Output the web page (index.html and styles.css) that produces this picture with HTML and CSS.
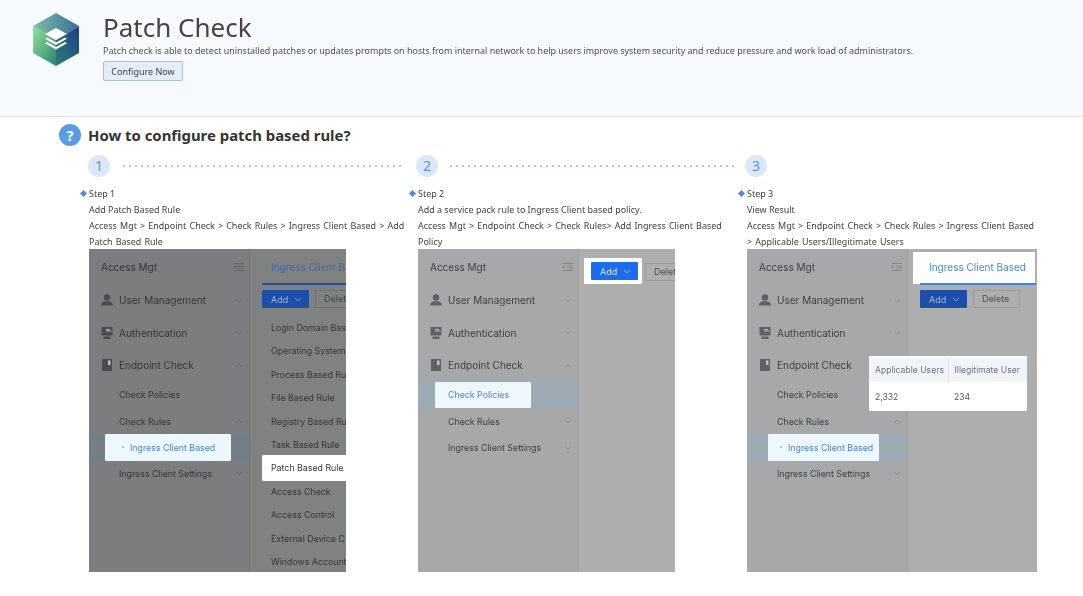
FILE: index.html
```html
<!DOCTYPE html>
<html lang="en">
<head>
<meta charset="utf-8">
<title>Patch Check</title>
<link rel="stylesheet" href="styles.css">
</head>
<body>
<svg class="defs" width="0" height="0" aria-hidden="true">
  <defs>
    <linearGradient id="gLeft" x1="0" y1="0" x2="1" y2="1"><stop offset="0" stop-color="#8fe39a"/><stop offset="1" stop-color="#2f8272"/></linearGradient>
    <linearGradient id="gRight" x1="0" y1="1" x2="1" y2="0"><stop offset="0" stop-color="#2f7c78"/><stop offset="1" stop-color="#1c3f86"/></linearGradient>
    <linearGradient id="gTop" x1="0" y1="0" x2="1" y2="0"><stop offset="0" stop-color="#7cc2a0"/><stop offset="1" stop-color="#3a6a9c"/></linearGradient>
  </defs>
  <symbol id="down" viewBox="0 0 10 6"><path d="M1.5 1.2 5 4.7l3.5-3.5" fill="none" stroke="currentColor" stroke-width="1"/></symbol>
  <symbol id="up" viewBox="0 0 10 6"><path d="M1.5 4.7 5 1.2l3.5 3.5" fill="none" stroke="currentColor" stroke-width="1"/></symbol>
  <symbol id="fold" viewBox="0 0 10 8"><path d="M0 .5h10M4 3h6M4 5h6M0 7.500h10" stroke="currentColor" stroke-width=".8" fill="none"/><path d="M0 2.500 2.500 4 0 5.500z" fill="currentColor"/></symbol>
  <symbol id="user" viewBox="0 0 12 12"><circle cx="6" cy="3.500" r="3.200" fill="currentColor"/><path d="M0 11.500c0-2.500 2-4 4-4.300h4c2 .3 4 1.800 4 4.300z" fill="currentColor"/></symbol>
  <symbol id="screen" viewBox="0 0 12 12"><path d="M.5 0h11v8.500H.5zM2.500 9.500h7V12h-7z" fill="currentColor"/><path d="M5 4h5.500M5 2.500h4" stroke="#c4c4c4" stroke-width=".9"/></symbol>
  <symbol id="book" viewBox="0 0 12 12"><path d="M1 0h10v12H1z" fill="currentColor"/><path d="M7 1.500h2.500v5L8.200 5.500 7 6.500z" fill="#c4c4c4"/></symbol>
</svg>

<header class="hero">
  <svg class="logo" viewBox="0 0 46 53" aria-hidden="true">
    <path d="M23 0 46 13 23 27 0 13z" fill="url(#gTop)"/>
    <path d="M0 13 23 27V53L0 40z" fill="url(#gLeft)"/>
    <path d="M46 13 23 27V53L46 40z" fill="url(#gRight)"/>
    <g fill="#fff">
      <path d="M23 15 34 21 23 27 12 21z"/>
      <path d="M14 24.500 23 29.500l9-5 2 1.300L23 32 12 25.800z"/>
      <path d="M14 29 23 34l9-5 2 1.300L23 36.500 12 30.300z"/>
    </g>
  </svg>
  <div class="hero-body">
    <h1 class="hero-title">Patch Check</h1>
    <p class="hero-desc">Patch check is able to detect uninstalled patches or updates prompts on hosts from internal network to help users improve system security and reduce pressure and work load of administrators.</p>
    <button class="configure">Configure Now</button>
  </div>
</header>

<main class="guide">
  <h2 class="guide-title"><span class="qmark">?</span>How to configure patch based rule?</h2>
  <div class="steps">

    <section class="step step-one">
      <div class="step-head"><span class="num">1</span><span class="dots"></span></div>
      <div class="step-text">
        <p class="step-label">Step 1</p>
        <p>Add Patch Based Rule</p>
        <p class="path">Access Mgt &gt; Endpoint Check &gt; Check Rules &gt; Ingress Client Based &gt; Add Patch Based Rule</p>
      </div>
      <div class="shot shot-dark">
        <nav class="side">
          <div class="side-title">Access Mgt<svg class="fold"><use href="#fold"/></svg></div>
          <div class="top-row"><svg class="ico"><use href="#user"/></svg>User Management<svg class="chev"><use href="#down"/></svg></div>
          <div class="top-row"><svg class="ico"><use href="#screen"/></svg>Authentication<svg class="chev"><use href="#down"/></svg></div>
          <div class="top-row"><svg class="ico"><use href="#book"/></svg>Endpoint Check<svg class="chev"><use href="#up"/></svg></div>
          <div class="sub-row">Check Policies</div>
          <div class="sub-row">Check Rules<svg class="chev"><use href="#up"/></svg></div>
          <div class="sub-row band"><div class="lit lit-leaf lit-a"><i class="dot"></i>Ingress Client Based</div></div>
          <div class="sub-row">Ingress Client Settings<svg class="chev"><use href="#down"/></svg></div>
        </nav>
        <div class="pane">
          <div class="tabs"><span class="tab">Ingress Client B</span></div>
          <div class="tools"><span class="add">Add<svg class="add-chev"><use href="#down"/></svg></span><span class="del">Delet</span></div>
          <ul class="menu">
            <li>Login Domain Bas</li>
            <li>Operating System</li>
            <li>Process Based Ru</li>
            <li>File Based Rule</li>
            <li>Registry Based Ru</li>
            <li>Task Based Rule</li>
            <li class="menu-lit">Patch Based Rule</li>
            <li>Access Check</li>
            <li>Access Control</li>
            <li>External Device C</li>
            <li>Windows Account</li>
          </ul>
        </div>
      </div>
    </section>

    <section class="step step-two">
      <div class="step-head"><span class="num">2</span><span class="dots"></span></div>
      <div class="step-text">
        <p class="step-label">Step 2</p>
        <p>Add a service pack rule to Ingress Client based policy.</p>
        <p class="path">Access Mgt &gt; Endpoint Check &gt; Check Rules&gt; Add Ingress Client Based Policy</p>
      </div>
      <div class="shot">
        <nav class="side">
          <div class="side-title">Access Mgt<svg class="fold"><use href="#fold"/></svg></div>
          <div class="top-row"><svg class="ico"><use href="#user"/></svg>User Management<svg class="chev"><use href="#down"/></svg></div>
          <div class="top-row"><svg class="ico"><use href="#screen"/></svg>Authentication<svg class="chev"><use href="#down"/></svg></div>
          <div class="top-row"><svg class="ico"><use href="#book"/></svg>Endpoint Check<svg class="chev"><use href="#up"/></svg></div>
          <div class="sub-row band"><div class="lit lit-b">Check Policies</div></div>
          <div class="sub-row">Check Rules<svg class="chev"><use href="#down"/></svg></div>
          <div class="sub-row">Ingress Client Settings<svg class="chev"><use href="#down"/></svg></div>
        </nav>
        <div class="pane pane-b">
          <div class="tools tools-b">
            <div class="add-lit"><span class="add add-bright">Add<svg class="add-chev"><use href="#down"/></svg></span></div>
            <span class="del">Delet</span>
          </div>
        </div>
      </div>
    </section>

    <section class="step step-wide">
      <div class="step-head"><span class="num">3</span></div>
      <div class="step-text">
        <p class="step-label">Step 3</p>
        <p>View Result</p>
        <p class="path">Access Mgt &gt; Endpoint Check &gt; Check Rules &gt; Ingress Client Based &gt; Applicable Users/Illegitimate Users</p>
      </div>
      <div class="shot">
        <nav class="side">
          <div class="side-title">Access Mgt<svg class="fold"><use href="#fold"/></svg></div>
          <div class="top-row"><svg class="ico"><use href="#user"/></svg>User Management<svg class="chev"><use href="#down"/></svg></div>
          <div class="top-row"><svg class="ico"><use href="#screen"/></svg>Authentication<svg class="chev"><use href="#down"/></svg></div>
          <div class="top-row"><svg class="ico"><use href="#book"/></svg>Endpoint Check<svg class="chev"><use href="#up"/></svg></div>
          <div class="sub-row">Check Policies</div>
          <div class="sub-row">Check Rules<svg class="chev"><use href="#up"/></svg></div>
          <div class="sub-row band"><div class="lit lit-leaf lit-c"><i class="dot"></i>Ingress Client Based</div></div>
          <div class="sub-row">Ingress Client Settings<svg class="chev"><use href="#down"/></svg></div>
        </nav>
        <div class="pane">
          <div class="tabs tabs-lit"><span class="tab">Ingress Client Based</span></div>
          <div class="tools"><span class="add">Add<svg class="add-chev"><use href="#down"/></svg></span><span class="del">Delete</span></div>
        </div>
        <table class="result">
          <thead><tr><th>Applicable Users</th><th>Illegitimate User</th></tr></thead>
          <tbody><tr><td>2,332</td><td>234</td></tr></tbody>
        </table>
      </div>
    </section>

  </div>
</main>
</body>
</html>
```

FILE: styles.css
```css
* { box-sizing: border-box; }
html, body { margin: 0; padding: 0; }
body {
  width: 1083px;
  height: 596px;
  overflow: hidden;
  background: #fff;
  color: #444;
  font-family: "Noto Sans", "Liberation Sans", sans-serif;
}
p, h1, h2, ul { margin: 0; padding: 0; }
.defs { position: absolute; }

.hero {
  height: 117px;
  display: flex;
  align-items: flex-start;
  padding: 13px 0 0 33px;
  background: #f6f9fd;
  border-bottom: 1px solid #dfe3e8;
}
.logo { width: 46px; height: 53px; flex: none; filter: blur(.3px); }
.hero-body { margin-left: 24px; filter: blur(.2px); }
.hero-title {
  margin-top: -1px;
  font-size: 26px;
  font-weight: 400;
  line-height: 30px;
  color: #444;
}
.hero-desc { margin-top: 2px; font-size: 8.95px; line-height: 14px; color: #4d4d4d; white-space: nowrap; }
.configure {
  display: block;
  width: 80px;
  height: 20px;
  margin-top: 3px;
  padding: 0;
  font: 9px/19px "Noto Sans", "Liberation Sans", sans-serif;
  color: #3c3c3c;
  background: #e4edf9;
  border: 1px solid #a9bfdc;
  border-radius: 2px;
}

.guide { padding-top: 7px; }
.guide-title {
  display: flex;
  align-items: center;
  height: 22px;
  padding-left: 59px;
  font-size: 14.9px;
  font-weight: 700;
  color: #333;
}
.qmark {
  width: 22px;
  height: 22px;
  margin-right: 7px;
  border-radius: 50%;
  background: #5a9be6;
  color: #fff;
  font-size: 15px;
  line-height: 22px;
  text-align: center;
}

.steps { display: flex; gap: 9px; margin-top: 9px; padding-left: 89px; }
.step { width: 320px; flex: none; display: flex; flex-direction: column; }
.step-wide { width: 290px; }
.step-head { display: flex; align-items: center; height: 22px; margin-left: -2px; }
.step-one .step-head { margin-left: -1px; }
.num {
  width: 22px;
  height: 22px;
  flex: none;
  border-radius: 50%;
  background: #dce8f8;
  color: #5a93dd;
  font-size: 14px;
  line-height: 22px;
  text-align: center;
}
.dots {
  flex: 1;
  height: 2px;
  margin-left: 13px;
  margin-right: 5px;
  background: radial-gradient(circle at 1px 1px, #a9c8ee 1px, transparent 1.2px) 0 0 / 6px 2px repeat-x;
}
.step-two .dots { margin-left: 12px; margin-right: 2px; }
.step-text { height: 63px; margin-top: 9px; font-size: 8.95px; line-height: 16px; color: #404040; filter: blur(.2px); }
.path { word-spacing: .85px; }
.step-label { position: relative; }
.step-label::before {
  content: "";
  position: absolute;
  left: -8px;
  top: 5px;
  width: 5px;
  height: 5px;
  background: #4a8bdc;
  transform: rotate(45deg);
}

.shot {
  width: 257px;
  height: 323px;
  display: flex;
  position: relative;
  overflow: hidden;
  background: #aeaeae;
  color: #3e3e3e;
  font-family: Inter, "Liberation Sans", sans-serif;
  filter: blur(.4px);
}
.step-wide .shot { width: 290px; }
.shot-dark { background: #808181; color: #363636; }
.side {
  width: 161px;
  flex: none;
  background: #a7a8a9;
  border-right: 1px solid #9f9f9f;
}
.shot-dark .side { background: #7b7d7e; border-right-color: #747474; }
.side-title {
  position: relative;
  height: 35px;
  padding-left: 12px;
  font-size: 10px;
  line-height: 37px;
}
.top-row {
  position: relative;
  display: flex;
  align-items: center;
  height: 32.5px;
  padding-left: 12px;
  font-size: 10px;
}
.sub-row {
  position: relative;
  display: flex;
  align-items: center;
  height: 26.4px;
  padding-left: 30px;
  font-size: 8.8px;
}
.fold { position: absolute; left: 145px; top: 14px; width: 10px; height: 8px; color: #808080; }
.shot-dark .fold { color: #5f5f5f; }
.ico { width: 12px; height: 12px; margin-right: 6px; flex: none; color: #5e6265; }
.shot-dark .ico { color: #4a4d4f; }
.chev { position: absolute; left: 146px; top: 50%; width: 8px; height: 5px; margin-top: -2.500px; color: #848484; }
.shot-dark .chev { color: #5c5c5c; }
.band { padding-left: 0; background: #9eaab4; }
.shot-dark .band { background: #747e86; }
.lit {
  display: flex;
  align-items: center;
  height: 100%;
  background: #eef6fe;
  color: #4a86dc;
  border-radius: 1px;
}
.lit-a { width: 126px; margin-left: 16px; }
.lit-b { width: 96px; margin-left: 17px; padding-left: 13px; }
.lit-c { width: 111px; margin-left: 21px; }
.lit-leaf { padding-left: 17px; }
.lit-c.lit-leaf { padding-left: 12px; }
.dot { width: 2px; height: 2px; margin-right: 6px; background: #a9b5c4; border-radius: 50%; flex: none; }

.pane { flex: 1; min-width: 0; padding-left: 12px; }
.tabs { height: 36px; padding-left: 9px; border-bottom: 2px solid #244f9c; }
.tab { font-size: 10px; line-height: 36px; white-space: nowrap; color: #4268a6; }
.tabs-lit { position: relative; border-bottom: 0; }
.tabs-lit::before {
  content: "";
  position: absolute;
  left: -7px;
  right: 2px;
  top: 3px;
  height: 32px;
  background: #fff;
}
.tabs-lit::after {
  content: "";
  position: absolute;
  left: 0;
  right: 1px;
  top: 34px;
  height: 2px;
  background: #3f82e0;
}
.tabs-lit .tab { position: relative; color: #4a86dc; }
.tools { display: flex; gap: 6px; margin-top: 5px; }
.add {
  display: flex;
  align-items: center;
  width: 47px;
  height: 18px;
  flex: none;
  padding-left: 9px;
  background: #1c4fa8;
  border-radius: 1px;
  color: #9db2d6;
  font-size: 9px;
}
.add-bright { background: #1a6cf0; color: #d8e6fc; }
.add-chev { width: 8px; height: 5px; margin-left: 6px; }
.del {
  display: block;
  width: 47px;
  height: 18px;
  flex: none;
  padding-left: 8px;
  border: 1px solid #9b9b9b;
  border-radius: 1px;
  font-size: 9px;
  line-height: 16px;
  white-space: nowrap;
  color: #4f4f4f;
}
.shot-dark .del { border-color: #6f6f6f; color: #444; border-right: 0; width: 31px; }
.pane-b { padding-left: 5px; }
.tools-b { gap: 3px; margin-top: 9px; align-items: flex-start; }
.add-lit { padding: 4px 4px 4px 7px; background: #fff; }
.tools-b .del { margin-top: 5px; width: 30px; border-right: 0; }
.menu { list-style: none; margin-top: 8px; font-size: 8.8px; }
.menu li { height: 23.4px; padding-left: 9px; line-height: 23.4px; white-space: nowrap; }
.menu .menu-lit { height: 26px; margin: -1.300px 0; line-height: 26px; background: #fff; border-radius: 1px 0 0 1px; }

.result {
  position: absolute;
  left: 122px;
  top: 107px;
  width: 158px;
  height: 55px;
  border-collapse: collapse;
  background: #fff;
  color: #555;
  font-size: 8.6px;
  border-top: 2px solid #fff;
}
.result th {
  width: 79px;
  height: 25px;
  padding: 0 0 0 6px;
  font-weight: 400;
  text-align: left;
  color: #6b7280;
  background: #f1f4f8;
  white-space: nowrap;
}
.result th + th { border-left: 1px solid #e3e7ec; }
.result td { padding: 0 0 0 6px; }
```
